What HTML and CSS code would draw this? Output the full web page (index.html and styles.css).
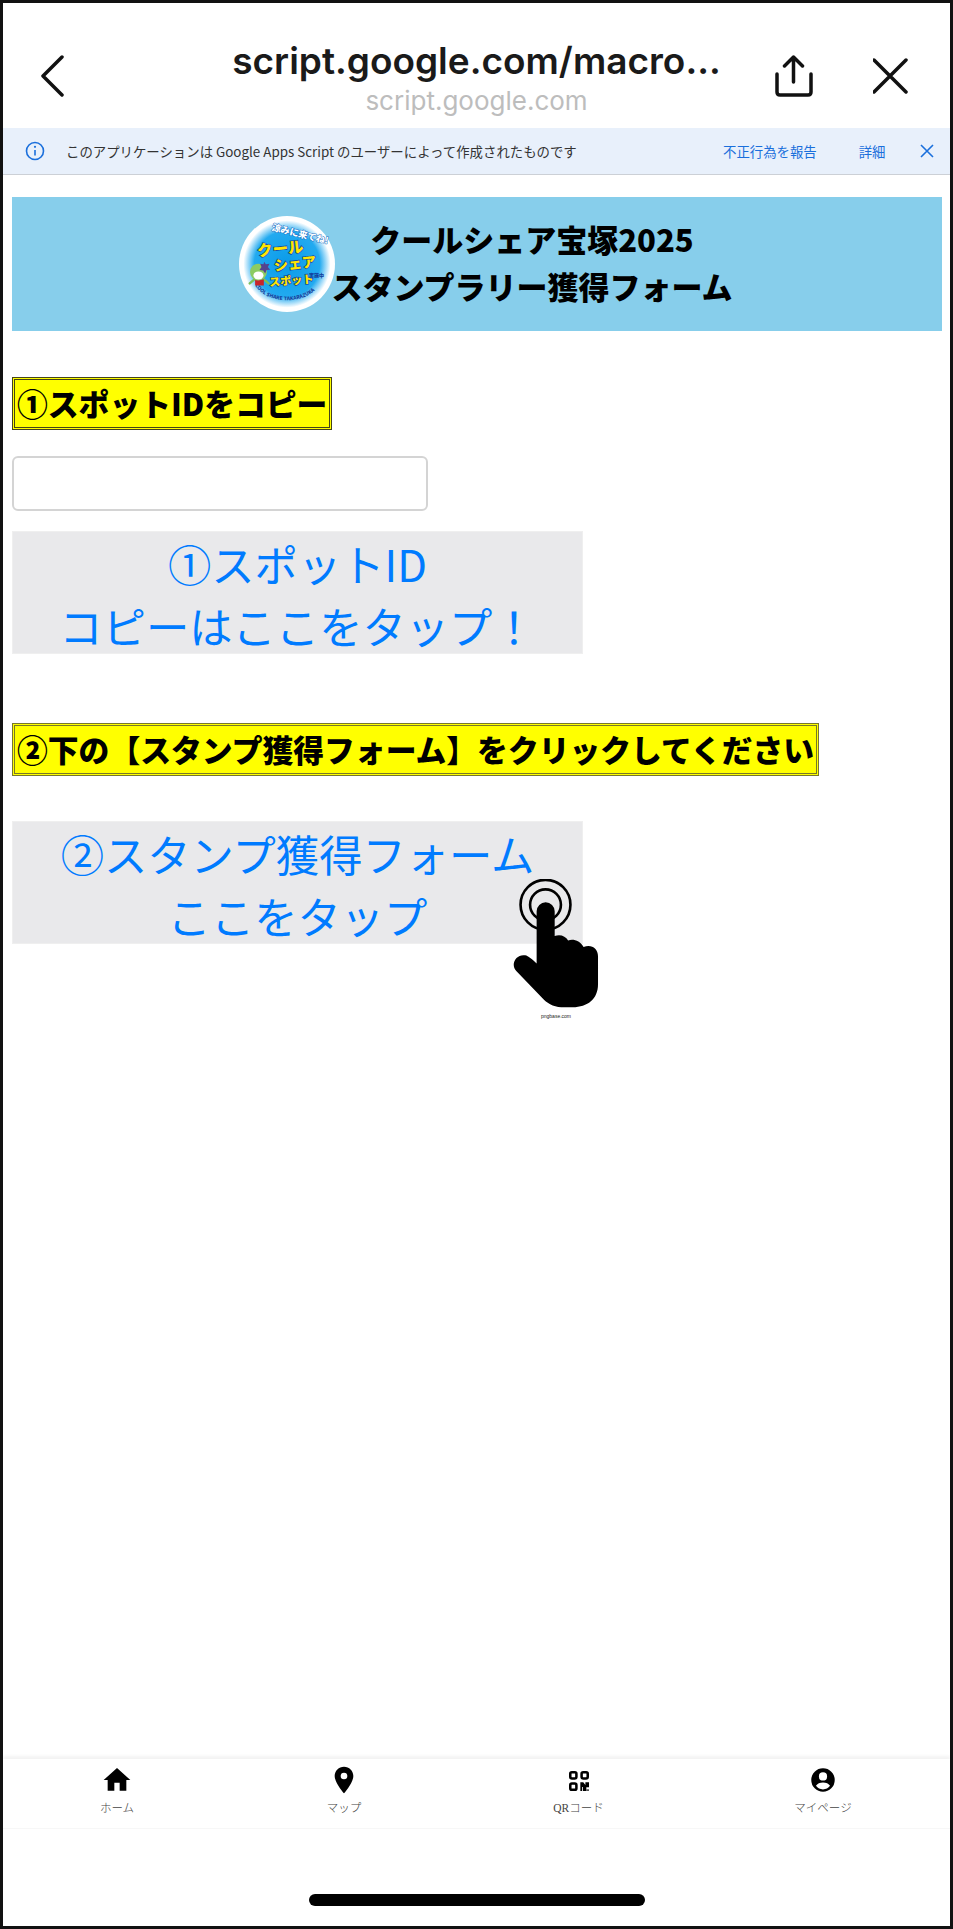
FILE: index.html
```html
<!DOCTYPE html>
<html lang="ja">
<head>
    <meta charset="UTF-8">
    <meta name="viewport" content="width=device-width, initial-scale=1.0">
    <title>クールシェア宝塚2025 スタンプラリー獲得フォーム</title>
    <link rel="stylesheet" href="styles.css">
</head>
<body>

<div class="phone">

    <!-- Browser header -->
    <header class="browserBar">
        <div class="barLeft">
            <svg class="backIcon" viewBox="0 0 24 42"><path d="M22 2 3 21l19 19" /></svg>
        </div>
        <div class="barTitle">
            <div class="barUrl">script.google.com/macro...</div>
            <div class="barHost">script.google.com</div>
        </div>
        <div class="barRight">
            <svg class="shareIcon" viewBox="0 0 40 42"><path d="M18.500 27V2M9.500 11l9-9 9 9M2 19v18q0 3 3 3h28q3 0 3-3V19" /></svg>
            <svg class="closeIcon" viewBox="0 0 36 36"><path d="M1 2l32 32M33 2 1 34" /></svg>
        </div>
    </header>

    <!-- Apps Script notice -->
    <div class="notice">
        <svg class="infoIcon" viewBox="0 0 20 20"><circle cx="10" cy="10" r="8.5" /><path d="M10 9v5.5" /><circle class="infoDot" cx="10" cy="5.8" r="1.1" /></svg>
        <span class="noticeText">このアプリケーションは Google Apps Script のユーザーによって作成されたものです</span>
        <a class="noticeLink noticeReport">不正行為を報告</a>
        <a class="noticeLink noticeMore">詳細</a>
        <svg class="noticeClose" viewBox="0 0 14 14"><path d="M1 1l12 12M13 1 1 13" /></svg>
    </div>

    <main class="content">
        <div class="hero">
            <svg class="logo" viewBox="112 79 286 286">
                <defs>
                    <radialGradient id="logoBlue">
                        <stop offset="0" stop-color="#0a9be8" />
                        <stop offset="0.75" stop-color="#22aaf0" />
                        <stop offset="1" stop-color="#ffffff" />
                    </radialGradient>
                    <path id="logoArc" d="M160 285C195 345 315 345 350 285" />
                </defs>
                <circle cx="255" cy="222" r="143" fill="#fff" />
                <circle cx="255" cy="222" r="130" fill="url(#logoBlue)" />
                <text class="logoTop" x="292" y="142" transform="rotate(14 292 142)">涼みに来てね!</text>
                <text class="logoBig" x="168" y="200" transform="rotate(-6 168 200)">クール</text>
                <text class="logoMid" x="218" y="243" transform="rotate(-6 218 243)">シェア</text>
                <text class="logoSmall" x="203" y="288" transform="rotate(-4 203 288)">スポット</text>
                <text class="logoSide" x="343" y="262">実施中</text>
                <text class="logoBand"><textPath href="#logoArc">COOL SHARE TAKARAZUKA</textPath></text>
                <!-- mascot -->
                <path d="M158 268l-14 12M186 268l14 12" stroke="#7cc05a" stroke-width="7" stroke-linecap="round" />
                <path d="M160 268h26v18h-26z" fill="#c8242b" />
                <circle cx="170" cy="246" r="25" fill="#8ccb63" />
                <ellipse cx="170" cy="256" rx="15" ry="12" fill="#fff" />
                <path d="M187 215l5 8 11-2-5 10 7 8-11 1-4 10-6-9-11-1 6-9-4-10 10 2z" fill="#55438f" />
            </svg>
            <h1 class="heroTitle">クールシェア宝塚2025<br>スタンプラリー獲得フォーム</h1>
        </div>

        <h2 class="stepLabel stepOne">①スポットIDをコピー</h2>
        <input class="spotInput" type="text">
        <button class="bigButton">①スポットID<br>コピーはここをタップ！</button>

        <h2 class="stepLabel stepTwo">②下の【スタンプ獲得フォーム】をクリックしてください</h2>
        <div class="formWrap">
            <button class="bigButton bigButtonWide">②スタンプ獲得フォーム<br>ここをタップ</button>
            <div class="tapHand">
                <svg class="handIcon" viewBox="68 55 262 392">
                    <circle class="handRing" cx="167" cy="133" r="76" />
                    <circle class="handRing" cx="167" cy="133" r="47" />
                    <path d="M140 153A27.5 27.5 0 0 1 195 153V228C212 222 228 228 236 242C252 236 272 243 283 262C305 252 327 265 327 290V375C327 420 295 445 250 445H215C190 445 170 432 155 415L78 335C58 312 80 282 105 287C115 289 125 298 140 312Z" />
                </svg>
                <span class="handCredit">pngbase.com</span>
            </div>
        </div>
    </main>

    <!-- Bottom tabs -->
    <nav class="tabBar">
        <div class="tab">
            <svg class="tabIcon" viewBox="0 0 24 24"><path d="M10 20v-6h4v6h5v-8h3L12 3 2 12h3v8z" /></svg>
            <span>ホーム</span>
        </div>
        <div class="tab">
            <svg class="tabIcon" viewBox="0 0 24 24"><path d="M12 2C8.13 2 5 5.13 5 9c0 5.25 7 13 7 13s7-7.75 7-13c0-3.87-3.13-7-7-7zm0 9.5a2.5 2.5 0 0 1 0-5 2.5 2.5 0 0 1 0 5z" /></svg>
            <span>マップ</span>
        </div>
        <div class="tab">
            <svg class="tabIcon" viewBox="0 0 24 24">
                <g class="qrBox">
                    <rect x="5.450" y="6.200" width="4.600" height="4.600" rx="1.200" />
                    <rect x="13.950" y="6.200" width="4.600" height="4.600" rx="1.200" />
                    <rect x="5.450" y="14.700" width="4.600" height="4.600" rx="1.200" />
                </g>
                <path d="M13 13.750h2.200l1.600 2v-2h2.700v3.700h-2v2.800h-2.500v-3h-.6v3H13zM17.800 19h.7v1.200h-.7zM19 19h.5v1.200H19z" />
            </svg>
            <span>QRコード</span>
        </div>
        <div class="tab">
            <svg class="tabIcon" viewBox="0 0 24 24"><path transform="translate(12 12) scale(.88) translate(-12 -12)" d="M12 2a10 10 0 1 0 0 20 10 10 0 0 0 0-20zm0 3.500a3.500 3.500 0 1 1 0 7 3.500 3.500 0 0 1 0-7zM12 20a7.500 7.500 0 0 1-6-3c.9-1.900 3.600-2.900 6-2.900s5.100 1 6 2.900a7.500 7.500 0 0 1-6 3z" /></svg>
            <span>マイページ</span>
        </div>
    </nav>

    <div class="homeArea">
        <div class="homeBar"></div>
    </div>
</div>

</body>
</html>
```

FILE: styles.css
```css
* {
    box-sizing: border-box;
}

html, body {
    margin: 0;
    padding: 0;
    background-color: white;
    font-family: "Noto Sans CJK JP", "Noto Sans", sans-serif;
}

.phone {
    width: 953px;
    height: 1929px;
    border: 3px solid #111;
    display: flex;
    flex-direction: column;
    overflow: hidden;
}

/* Browser header */
.browserBar {
    height: 125px;
    flex: none;
    display: grid;
    grid-template-columns: 1fr auto 1fr;
    align-items: start;
}

.barLeft {
    padding: 52px 0 0 37px;
}

.barRight {
    display: flex;
    justify-content: flex-end;
    gap: 58px;
    padding: 52px 41px 0 0;
}

.backIcon, .shareIcon, .closeIcon {
    display: block;
    fill: none;
    stroke: #111;
    stroke-width: 3.5;
    stroke-linecap: round;
    stroke-linejoin: round;
}

.backIcon {
    width: 24px;
    height: 42px;
}

.shareIcon {
    width: 40px;
    height: 42px;
}

.closeIcon {
    width: 36px;
    height: 36px;
    margin-top: 3px;
}

.barTitle {
    text-align: center;
}

.barUrl {
    margin-top: 35px;
    font-family: Inter, "Noto Sans", sans-serif;
    font-size: 37px;
    font-weight: 600;
    line-height: 45px;
    color: #1a1a1a;
}

.barHost {
    font-family: Inter, "Noto Sans", sans-serif;
    font-size: 26px;
    line-height: 36px;
    color: #bdbdbd;
}

/* Notice */
.notice {
    height: 47px;
    flex: none;
    display: flex;
    align-items: center;
    background-color: #e8f0fb;
    border-bottom: 1px solid #ccd0d6;
    padding: 0 0 0 22px;
    font-size: 13.4px;
}

.infoIcon {
    width: 20px;
    height: 20px;
    fill: none;
    stroke: #1a6fdc;
    stroke-width: 1.6;
}

.infoDot {
    fill: #1a6fdc;
    stroke: none;
}

.noticeText {
    margin-left: 21px;
    width: 657px;
    color: #333;
    white-space: nowrap;
}

.noticeLink {
    color: #1a6fdc;
    font-size: 13.4px;
    white-space: nowrap;
}

.noticeMore {
    margin-left: 42px;
}

.noticeClose {
    width: 14px;
    height: 14px;
    margin-left: 34px;
    fill: none;
    stroke: #1a6fdc;
    stroke-width: 1.6;
}

/* Page content */
.content {
    flex: 1;
    padding: 22px 8px 0 9px;
}

.hero {
    height: 134px;
    background-color: skyblue;
    display: flex;
    justify-content: center;
    align-items: center;
    padding-left: 18px;
}

.logo {
    width: 96px;
    height: 96px;
    flex: none;
}

.logo text {
    font-family: "Noto Sans CJK JP", sans-serif;
    font-weight: 900;
    paint-order: stroke;
}

.logoTop {
    font-size: 27px;
    fill: #fff;
    stroke: #1b6fc4;
    stroke-width: 3px;
    text-anchor: middle;
}

.logoBig {
    font-size: 46px;
    fill: #ffe600;
    stroke: #123f9c;
    stroke-width: 4px;
}

.logoMid {
    font-size: 42px;
    fill: #ffe600;
    stroke: #123f9c;
    stroke-width: 4px;
}

.logoSmall {
    font-size: 33px;
    fill: #ffe600;
    stroke: #123f9c;
    stroke-width: 4px;
}

.logoSide {
    font-size: 15px;
    fill: #123f9c;
    text-anchor: middle;
}

.logoBand {
    font-size: 15px;
    fill: #123f9c;
}

.heroTitle {
    margin: 0 0 4px -4px;
    width: 403px;
    font-size: 31px;
    font-weight: 900;
    line-height: 47px;
    text-align: center;
    color: #000;
    white-space: nowrap;
}

.stepLabel {
    display: table;
    margin: 0;
    height: 53px;
    padding: 0 2px;
    background-color: yellow;
    border: 3px double #44441a;
    font-size: 30.8px;
    font-weight: 900;
    line-height: 46px;
    color: #000;
    white-space: nowrap;
}

.stepOne {
    margin-top: 46px;
}

.stepTwo {
    margin-top: 69px;
    border-color: #77772a;
}

.spotInput {
    display: block;
    width: 416px;
    height: 55px;
    margin-top: 26px;
    background-color: white;
    border: 2px solid #d4d4d4;
    border-radius: 6px;
}

.bigButton {
    display: block;
    width: 571px;
    height: 123px;
    margin-top: 20px;
    padding: 0 0 12px;
    background-color: #e9e9eb;
    border: 1px solid #efefef;
    font-family: "Noto Sans CJK JP", sans-serif;
    font-size: 43.3px;
    line-height: 62px;
    color: #007bff;
    white-space: nowrap;
}

.bigButtonWide {
    margin-top: 0;
}

.formWrap {
    position: relative;
    margin-top: 45px;
}

.tapHand {
    position: absolute;
    left: 501px;
    top: 58px;
    width: 86px;
    text-align: center;
}

.handIcon {
    display: block;
    width: 86px;
    height: 129px;
}

.handRing {
    fill: none;
    stroke: #000;
    stroke-width: 8;
}

.handCredit {
    display: block;
    margin-top: 5px;
    font-family: "Liberation Sans", sans-serif;
    font-size: 5px;
    line-height: 6px;
    color: #222;
}

/* Bottom tabs */
.tabBar {
    height: 70px;
    flex: none;
    display: grid;
    grid-template-columns: 228px 226px 243px 246px;
    box-shadow: 0 -3px 3px rgba(0, 0, 0, 0.05);
    border-bottom: 1px solid #f7f7f7;
}

.tab {
    display: flex;
    flex-direction: column;
    align-items: center;
    padding-top: 5px;
    font-family: "Liberation Serif", "Noto Sans CJK JP", serif;
    font-size: 11.5px;
    font-weight: 300;
    line-height: 16px;
    color: #444;
}

.tabIcon {
    display: block;
    width: 32px;
    height: 32px;
    margin-bottom: 4px;
    fill: #000;
}

.qrBox {
    fill: none;
    stroke: #000;
    stroke-width: 1.900;
}

/* Home indicator */
.homeArea {
    height: 97px;
    flex: none;
    display: flex;
    justify-content: center;
    padding-top: 65px;
}

.homeBar {
    width: 336px;
    height: 12px;
    background-color: #000;
    border-radius: 6px;
}
```
